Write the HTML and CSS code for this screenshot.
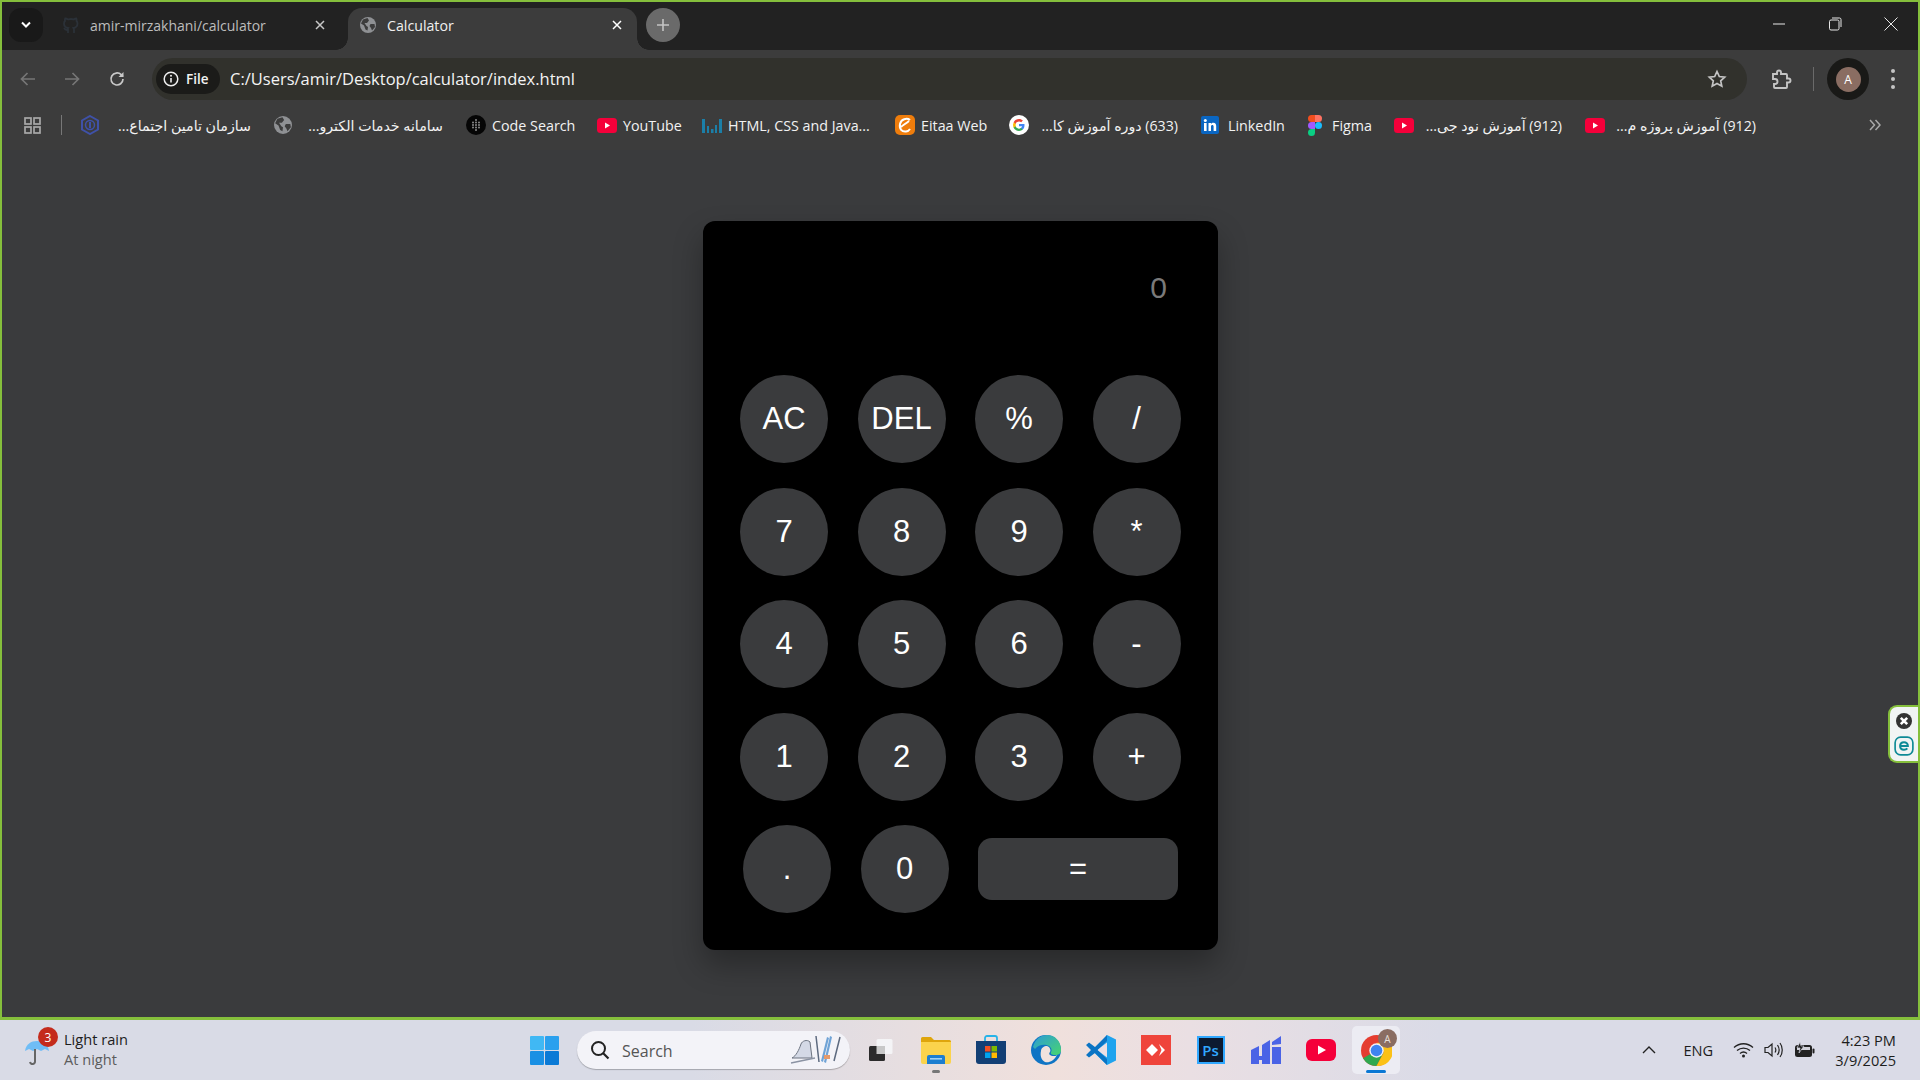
FILE: index.html
```html
<!DOCTYPE html>
<html lang="en">
<head>
<meta charset="utf-8">
<title>Calculator</title>
<link rel="stylesheet" href="styles.css">
</head>
<body>
<svg class="defs" width="0" height="0" aria-hidden="true">
  <symbol id="globe" viewBox="0 0 16 16"><circle cx="8" cy="8" r="8" fill="#8f9194"/><path d="M3 2.500 7.500 1 9 3.500 7 6 4.500 6 6.500 9 8 10 7.500 13.500 5.500 12.500 4 8.500 1 6.500ZM10.500 7h4l.5 3-3 3.500-1-2.500-1.500-2Z" fill="#3c3c3c"/></symbol>
  <symbol id="yt" viewBox="0 0 20 15"><rect width="20" height="15" rx="3.500" fill="#f5003a"/><path d="M8 4.500v6l5-3z" fill="#fff"/></symbol>
</svg>
<div class="window">
  <header class="tabstrip">
    <button class="tab-menu"><svg width="12" height="8" viewBox="0 0 12 8"><path d="M2 1.500 6 5.500 10 1.500" fill="none" stroke="#fff" stroke-width="2"/></svg></button>
    <div class="tab">
      <svg class="tab-icon" width="20" height="20" viewBox="0 0 20 20"><path d="M7 18v-3c-3 .5-3.500-1-4-2M13 18v-3c0-1 0-1.500-.5-2 2.500-.5 4-1.500 4-4.500 0-1-.4-2-1-2.500.2-.8.2-1.700-.2-2.500-1 0-2 .5-2.600 1a8 8 0 0 0-5.400 0C6.200 3.900 5.200 3.500 4.200 3.500c-.4.800-.4 1.700-.2 2.500-.6.500-1 1.500-1 2.500 0 3 1.500 4 4 4.500-.5.500-.5 1-.5 2" fill="none" stroke="#2b3138" stroke-width="1.800"/></svg>
      <span class="tab-title dim">amir-mirzakhani/calculator</span>
      <svg class="tab-close" width="10" height="10" viewBox="0 0 10 10"><path d="M1 1 9 9M9 1 1 9" stroke="#c8c8c8" stroke-width="1.500"/></svg>
    </div>
    <div class="tab active">
      <svg class="tab-icon" width="16" height="16"><use href="#globe"/></svg>
      <span class="tab-title">Calculator</span>
      <svg class="tab-close" width="10" height="10" viewBox="0 0 10 10"><path d="M1 1 9 9M9 1 1 9" stroke="#fff" stroke-width="1.500"/></svg>
    </div>
    <button class="new-tab"><svg width="14" height="14" viewBox="0 0 14 14"><path d="M7 1v12M1 7h12" stroke="#c4c4c4" stroke-width="1.600"/></svg></button>
    <div class="win-controls">
      <svg width="14" height="14" viewBox="0 0 14 14"><path d="M1 7h12" stroke="#e8e8e8" stroke-width="1"/></svg>
      <svg width="14" height="14" viewBox="0 0 14 14"><rect x="1.500" y="3" width="9.500" height="10" rx="1.500" fill="none" stroke="#e8e8e8"/><path d="M4 1h7.500A1.500 1.500 0 0 1 13 2.500V10" fill="none" stroke="#e8e8e8"/></svg>
      <svg width="14" height="14" viewBox="0 0 14 14"><path d="M.5.5l13 13M13.500.5l-13 13" stroke="#e8e8e8" stroke-width="1"/></svg>
    </div>
  </header>

  <div class="toolbar">
    <span class="nav"><svg width="18" height="16" viewBox="0 0 18 16"><path d="M16 8H3M8.500 2 2.500 8l6 6" fill="none" stroke="#767676" stroke-width="1.700"/></svg></span>
    <span class="nav"><svg width="18" height="16" viewBox="0 0 18 16"><path d="M2 8h13M9.500 2l6 6-6 6" fill="none" stroke="#767676" stroke-width="1.700"/></svg></span>
    <span class="nav reload"><svg width="18" height="18" viewBox="0 0 18 18"><path d="M15 9a6 6 0 1 1-1.800-4.300L15 6.500" fill="none" stroke="#c8c8c8" stroke-width="1.700"/><path d="M15.500 2v5h-5z" fill="#c8c8c8"/></svg></span>
    <div class="omnibox">
      <span class="chip"><svg width="16" height="16" viewBox="0 0 16 16"><circle cx="8" cy="8" r="6.800" fill="none" stroke="#eee" stroke-width="1.500"/><path d="M8 7v4.500" stroke="#eee" stroke-width="1.600"/><circle cx="8" cy="4.800" r="1" fill="#eee"/></svg>File</span>
      <span class="url">C:/Users/amir/Desktop/calculator/index.html</span>
      <svg class="star" width="20" height="20" viewBox="0 0 20 20"><path d="M10 2.500l2.300 5 5.400.6-4 3.700 1.100 5.400L10 14.500l-4.800 2.700 1.100-5.400-4-3.700 5.400-.6z" fill="none" stroke="#c4c4c4" stroke-width="1.700"/></svg>
    </div>
    <span class="ext"><svg width="22" height="22" viewBox="0 0 22 22"><path d="M3 6h4V4.500a2 2 0 0 1 4 0V6h5a1 1 0 0 1 1 1v3.500h1.500a2 2 0 0 1 0 4H17V19a1 1 0 0 1-1 1H5a1 1 0 0 1-1-1v-3h1a2.500 2.500 0 0 0 0-5H3z" fill="none" stroke="#c4c4c4" stroke-width="1.900"/></svg></span>
    <span class="tool-sep"></span>
    <span class="profile"><span class="avatar">A</span></span>
    <span class="dots"><i></i><i></i><i></i></span>
  </div>

  <nav class="bookmarks">
    <div class="apps">
      <svg width="17" height="17" viewBox="0 0 17 17"><g fill="none" stroke="#a8a8a8" stroke-width="1.700"><rect x="1" y="1" width="6" height="6"/><rect x="10" y="1" width="6" height="6"/><rect x="1" y="10" width="6" height="6"/><rect x="10" y="10" width="6" height="6"/></g></svg>
      <span class="bar-sep"></span>
    </div>
    <a class="bm"><svg width="18" height="20" viewBox="0 0 18 20"><path d="M9 1l8 4.500v9L9 19l-8-4.500v-9z" fill="none" stroke="#3f51a8" stroke-width="2"/><circle cx="9" cy="10" r="4.500" fill="none" stroke="#3f51a8" stroke-width="1.500"/><path d="M9 7v6" stroke="#3f51a8" stroke-width="2"/></svg><span class="bm-text" dir="rtl">سازمان تامین اجتماع...</span></a>
    <a class="bm"><svg width="18" height="18"><use href="#globe"/></svg><span class="bm-text" dir="rtl">سامانه خدمات الکترو...</span></a>
    <a class="bm"><svg width="20" height="20" viewBox="0 0 20 20"><circle cx="10" cy="10" r="10" fill="#050505"/><g fill="#8a8a8a"><circle cx="10" cy="5" r="1"/><circle cx="7" cy="7.500" r="1"/><circle cx="10" cy="7.500" r="1"/><circle cx="13" cy="7.500" r="1"/><circle cx="7" cy="10" r="1"/><circle cx="10" cy="10" r="1"/><circle cx="13" cy="10" r="1"/><circle cx="7" cy="12.500" r="1"/><circle cx="10" cy="12.500" r="1"/><circle cx="13" cy="12.500" r="1"/><circle cx="10" cy="15" r="1"/></g></svg><span class="bm-text">Code Search</span></a>
    <a class="bm"><svg width="20" height="15"><use href="#yt"/></svg><span class="bm-text">YouTube</span></a>
    <a class="bm"><svg width="20" height="16" viewBox="0 0 20 16"><g fill="#1b7fa8"><rect x="0" y="2" width="3" height="14"/><rect x="5" y="9" width="2" height="7"/><rect x="9" y="12" width="2.500" height="4"/><rect x="13" y="8" width="2" height="8"/><rect x="17" y="2" width="3" height="14"/></g></svg><span class="bm-text">HTML, CSS and Java...</span></a>
    <a class="bm"><svg width="20" height="20" viewBox="0 0 20 20"><rect width="20" height="20" rx="5" fill="#ef7d0c"/><path d="M6 12c1.500-1.500 5-3.500 8-6M15 5c-3-2.500-9-1-10 4s2 8 6 7.500c1.500-.2 3-1 4-2.500" fill="none" stroke="#fff" stroke-width="2"/></svg><span class="bm-text">Eitaa Web</span></a>
    <a class="bm"><svg width="20" height="20" viewBox="0 0 20 20"><circle cx="10" cy="10" r="10" fill="#fff"/><path d="M15.500 10.200c0-.5 0-.9-.1-1.300H10v2.400h3.100c-.2.800-.6 1.400-1.300 1.800v1.500h2c1.100-1.100 1.700-2.600 1.700-4.400z" fill="#4285f4"/><path d="M10 16c1.600 0 2.900-.5 3.800-1.400l-2-1.500c-.5.400-1.100.6-1.800.6-1.500 0-2.800-1-3.200-2.400H4.700v1.500C5.700 14.700 7.700 16 10 16z" fill="#34a853"/><path d="M6.800 11.300c-.3-.8-.3-1.800 0-2.600V7.200H4.700a6 6 0 0 0 0 5.600z" fill="#fbbc05"/><path d="M10 6.400c.9 0 1.600.3 2.200.9l1.700-1.700C12.900 4.600 11.600 4 10 4 7.700 4 5.700 5.300 4.700 7.200l2.100 1.500C7.200 7.400 8.500 6.400 10 6.400z" fill="#ea4335"/></svg><span class="bm-text" dir="rtl">(633) دوره آموزش کا...</span></a>
    <a class="bm li"><svg width="18" height="18" viewBox="0 0 18 18"><rect width="18" height="18" rx="2" fill="#0a66c2"/><rect x="3" y="7" width="2.600" height="8" fill="#fff"/><circle cx="4.300" cy="4.500" r="1.500" fill="#fff"/><path d="M7.500 7H10v1.100c.5-.8 1.300-1.300 2.400-1.300 2 0 2.800 1.300 2.800 3.300V15h-2.600v-4.400c0-1-.4-1.600-1.200-1.600-.9 0-1.400.7-1.400 1.600V15H7.500z" fill="#fff"/></svg><span class="bm-text">LinkedIn</span></a>
    <a class="bm fig"><svg width="14" height="21" viewBox="0 0 14 21"><path d="M7 0H3.500a3.500 3.500 0 0 0 0 7H7z" fill="#f24e1e"/><path d="M7 0h3.500a3.500 3.500 0 0 1 0 7H7z" fill="#ff7262"/><path d="M7 7H3.500a3.500 3.500 0 0 0 0 7H7z" fill="#a259ff"/><circle cx="10.500" cy="10.500" r="3.500" fill="#1abcfe"/><path d="M3.500 14H7v3.500A3.500 3.500 0 1 1 3.500 14z" fill="#0acf83"/></svg><span class="bm-text">Figma</span></a>
    <a class="bm"><svg width="20" height="15"><use href="#yt"/></svg><span class="bm-text" dir="rtl">(912) آموزش نود جی...</span></a>
    <a class="bm"><svg width="20" height="15"><use href="#yt"/></svg><span class="bm-text" dir="rtl">(912) آموزش پروژه م...</span></a>
    <svg class="more" width="12" height="12" viewBox="0 0 12 12"><path d="M1 1l4.500 5L1 11M6.500 1 11 6l-4.500 5" fill="none" stroke="#a8a8a8" stroke-width="1.500"/></svg>
  </nav>

  <main class="page">
    <section class="calc">
      <div class="display">0</div>
      <div class="keypad">
        <div class="key-row"><button class="key">AC</button><button class="key">DEL</button><button class="key">%</button><button class="key">/</button></div>
        <div class="key-row"><button class="key">7</button><button class="key">8</button><button class="key">9</button><button class="key">*</button></div>
        <div class="key-row"><button class="key">4</button><button class="key">5</button><button class="key">6</button><button class="key">-</button></div>
        <div class="key-row"><button class="key">1</button><button class="key">2</button><button class="key">3</button><button class="key">+</button></div>
        <div class="key-row last"><button class="key">.</button><button class="key">0</button><button class="key equals">=</button></div>
      </div>
    </section>
    <aside class="eset">
      <svg width="16" height="16" viewBox="0 0 16 16"><circle cx="8" cy="8" r="8" fill="#333"/><path d="M4.800 4.800l6.400 6.400M11.200 4.800l-6.400 6.400" stroke="#fff" stroke-width="2.600"/></svg>
      <svg width="20" height="20" viewBox="0 0 18 18"><rect x="1" y="1" width="16" height="16" rx="5" fill="none" stroke="#0e8a96" stroke-width="1.500"/><path d="M5.500 9h7c0-2-1.500-3.300-3.500-3.300S5.500 7 5.500 9s1.500 3.400 3.500 3.400c1.300 0 2.300-.4 3-1.200" fill="none" stroke="#0e8a96" stroke-width="1.800"/></svg>
    </aside>
  </main>
</div>

<footer class="taskbar">
  <div class="weather">
    <svg class="umbrella" width="26" height="28" viewBox="0 0 26 28"><path d="M1 12C2 5 7 2 13 2s11 3 12 10z" fill="#6fbdf6"/><path d="M1 12l4-2 4 2 4-2 4 2 4-2 4 2" fill="#d9dae6"/><path d="M11 10v12a2.500 2.500 0 0 1-5 1" fill="none" stroke="#666" stroke-width="2"/></svg>
    <span class="badge">3</span>
    <div class="weather-text"><span>Light rain</span><span class="muted">At night</span></div>
  </div>
  <svg class="start" width="29" height="29" viewBox="0 0 29 29"><rect width="14" height="14" rx="1" fill="#40b8f4"/><rect x="15" width="14" height="14" rx="1" fill="#2aa0ee"/><rect y="15" width="14" height="14" rx="1" fill="#1a90e4"/><rect x="15" y="15" width="14" height="14" rx="1" fill="#0b7ad6"/></svg>
  <div class="search">
    <svg width="20" height="20" viewBox="0 0 20 20"><circle cx="8.500" cy="8.500" r="6.500" fill="none" stroke="#222" stroke-width="2"/><path d="M13 13l5.500 5.500" stroke="#222" stroke-width="2.200"/></svg>
    <span class="search-text">Search</span>
    <svg class="ski" width="56" height="32" viewBox="0 0 56 32"><path d="M2 24c4-2 7-8 9-14 1-3 6-5 9-2l2 16z" fill="#d4d9e6" stroke="#6c7380"/><path d="M1 29l24-5" stroke="#8b93a3" stroke-width="1.500"/><path d="M26 2l3 26M50 3l-6 24" stroke="#5d6a7f" stroke-width="1.500"/><path d="M33 28 39 4l-2-1-6 24z M36 29 42 3l-2-1-6 26z" fill="#6fa3d6"/><path d="M34 21h6v4h-6z" fill="#e69a6a"/></svg>
  </div>
  <div class="apps-row">
    <span class="app"><svg width="24" height="22" viewBox="0 0 24 22"><rect x="7.500" y="0" width="16" height="15" rx="1.500" fill="#f4f4f6"/><rect x="0" y="7" width="16" height="15" rx="1.500" fill="#2b2b2b"/><rect x="7.500" y="7" width="8.500" height="8" fill="#c8c8c8"/></svg></span>
    <span class="app"><svg width="30" height="27" viewBox="0 0 30 27"><path d="M0 1.500A1.500 1.500 0 0 1 1.500 0H10l3 3h15.500A1.500 1.500 0 0 1 30 4.500V8H0z" fill="#dfa50c"/><path d="M0 5h30v20a2 2 0 0 1-2 2H2a2 2 0 0 1-2-2z" fill="#fbd34c"/><path d="M6 20a2 2 0 0 1 2-2h14a2 2 0 0 1 2 2v7H6z" fill="#1d7ed0"/><rect x="9" y="21" width="12" height="1.600" fill="#9ed0f5"/></svg><i class="pip"></i></span>
    <span class="app"><svg width="30" height="30" viewBox="0 0 30 30"><path d="M9 6V3a2 2 0 0 1 2-2h8a2 2 0 0 1 2 2v3" fill="none" stroke="#27b3e8" stroke-width="1.800"/><path d="M0 6h30v20a3 3 0 0 1-3 3H3a3 3 0 0 1-3-3z" fill="#123f75"/><rect x="9" y="11" width="5.500" height="5.500" fill="#f25022"/><rect x="15.500" y="11" width="5.500" height="5.500" fill="#7fba00"/><rect x="9" y="17.500" width="5.500" height="5.500" fill="#00a4ef"/><rect x="15.500" y="17.500" width="5.500" height="5.500" fill="#ffb900"/></svg></span>
    <span class="app"><svg width="30" height="30" viewBox="0 0 30 30"><defs><linearGradient id="edge" x1="0" y1="0" x2="1" y2="1"><stop offset="0" stop-color="#2d9ad8"/><stop offset="1" stop-color="#48d66e"/></linearGradient></defs><circle cx="15" cy="15" r="15" fill="#0f74c4"/><path d="M2 12C4 4 10 0 16 0c8 0 14 6 14 15 0 3-2 5-6 5-3 0-5-1-4-3 1-1 1-4-2-6-4-2-10-2-14 3z" fill="url(#edge)"/><path d="M10 16c0-3 3-5 6-5 3 1 4 4 3 6-2 2 0 4 4 4 1 0 2 0 3-1-3 6-8 8-12 7-4-2-5-7-4-11z" fill="#f0e2de"/></svg></span>
    <span class="app"><svg width="30" height="30" viewBox="0 0 30 30"><path d="M21 0 30 4.500v21L21 30 7 16.500 21 0z" fill="#1fa3ee"/><path d="M21 7.500 11 15l10 7.500z" fill="#ebdfe4"/><path d="M21 0 9 12 3 7.500 0 10l5 5-5 5 3 2.500 6-4.500L21 30v-6L11.500 15 21 6z" fill="#0b74c4"/></svg></span>
    <span class="app"><svg width="30" height="30" viewBox="0 0 30 30"><rect width="30" height="30" fill="#ef443b"/><path d="M11 9l6 6-6 6-6-6zM18 9l6 6-6 6 2.500-6z" fill="#fff"/></svg></span>
    <span class="app"><span class="ps">Ps</span></span>
    <span class="app"><svg width="30" height="28" viewBox="0 0 30 28"><path d="M0 14l8-4v18H0zM11 9l8-5v24h-8zM21 11h9v17h-9zM21 6l9-6v8l-9 1zM8 20h3v4H8z" fill="#4a63e6"/></svg></span>
    <span class="app"><svg width="30" height="22" viewBox="0 0 30 22"><rect width="30" height="22" rx="6" fill="#f5003a"/><path d="M12 6.500v9l8-4.500z" fill="#fff"/></svg></span>
    <span class="app current"><svg width="31" height="31" viewBox="0 0 30 30"><circle cx="15" cy="15" r="15" fill="#e53d30"/><path d="M15 15 2 22.500A15 15 0 0 0 15 30L22 17z" fill="#2fa84f"/><path d="M15 7.500h14A15 15 0 0 1 15 30L22 17z" fill="#fbc117"/><circle cx="15" cy="15" r="7" fill="#f0f0f5"/><circle cx="15" cy="15" r="5.600" fill="#3e84f0"/></svg><span class="app-avatar">A</span><i class="run-bar"></i></span>
  </div>
  <div class="tray">
    <svg width="14" height="8" viewBox="0 0 14 8"><path d="M1 7l6-6 6 6" fill="none" stroke="#222" stroke-width="1.400"/></svg>
    <span class="lang">ENG</span>
    <svg class="tray-wifi" width="21" height="16" viewBox="0 0 21 16"><g fill="none" stroke="#222" stroke-width="1.300"><path d="M1 5.500c5.500-5 13.500-5 19 0M4 8.500c3.800-3.300 9.200-3.300 13 0M7 11.500c2-1.700 5-1.700 7 0"/></g><circle cx="10.500" cy="14" r="1.500" fill="#222"/></svg>
    <svg class="tray-vol" width="20" height="18" viewBox="0 0 20 18"><g fill="none" stroke="#222" stroke-width="1.200"><path d="M1 6.500h3l4-3.500v12l-4-3.500H1z"/><path d="M11 6.500c1 1.500 1 3.500 0 5M13.500 4c2 3 2 7 0 10M16 2c3 4 3 10 0 14"/></g></svg>
    <svg class="tray-bat" width="21" height="16" viewBox="0 0 21 16"><rect x="1" y="3" width="17" height="12" rx="2.500" fill="#222"/><rect x="3" y="5" width="13" height="3" fill="#d0d0d8"/><rect x="18.500" y="6.500" width="2" height="5" rx="1" fill="#222"/><path d="M6 0 3 6h3L5 11l5-7H7z" fill="#222" stroke="#dadbe6" stroke-width=".7"/></svg>
    <div class="clock"><span>4:23 PM</span><span>3/9/2025</span></div>
  </div>
</footer>
</body>
</html>
```
FILE: styles.css
```css
* { box-sizing: border-box; }
html, body { margin: 0; height: 100%; }
body {
  width: 1920px;
  height: 1080px;
  overflow: hidden;
  display: flex;
  flex-direction: column;
  font-family: "Open Sans", "DejaVu Sans", sans-serif;
  position: relative;
}
button { font: inherit; border: 0; padding: 0; }
.defs { position: absolute; }

.window {
  height: 1020px;
  border: 2px solid #85bf3c;
  border-bottom-width: 3px;
  display: flex;
  flex-direction: column;
  background: #3a3b3d;
  flex: none;
}

/* tabs */
.tabstrip {
  height: 48px;
  flex: none;
  background: #222222;
  display: flex;
  align-items: flex-end;
  padding-left: 7px;
  color: #fff;
}
.tab-menu {
  width: 34px;
  height: 34px;
  margin-bottom: 8px;
  background: #191919;
  border-radius: 12px;
  display: flex;
  align-items: center;
  justify-content: center;
}
.tab {
  width: 305px;
  height: 42px;
  display: flex;
  align-items: center;
  padding: 0 23px 8px 18px;
  position: relative;
}
.tab.active {
  width: 289px;
  background: #3c3c3c;
  border-radius: 14px 14px 0 0;
  padding: 0 15px 8px 12px;
}
.tab.active::before, .tab.active::after {
  content: "";
  position: absolute;
  bottom: 0;
  width: 12px;
  height: 12px;
  background: #222;
}
.tab.active::before { left: -12px; background: radial-gradient(circle at 0 0, #222 11.500px, #3c3c3c 12px); }
.tab.active::after { right: -12px; background: radial-gradient(circle at 100% 0, #222 11.500px, #3c3c3c 12px); }
.tab-icon { flex: none; }
.tab-title { flex: 1; margin-left: 9px; font-size: 14px; white-space: nowrap; color: #f0f0f0; }
.tab .tab-title.dim { color: #bdbdbd; }
.tab.active .tab-title { margin-left: 11px; font-size: 14.200px; }
.new-tab {
  width: 34px;
  height: 34px;
  margin: 0 0 8px 9px;
  border-radius: 50%;
  background: #6a6a6a;
  display: flex;
  align-items: center;
  justify-content: center;
}
.win-controls {
  margin-left: auto;
  height: 100%;
  display: flex;
  align-items: center;
  gap: 42px;
  padding: 0 20px 4px 0;
}

/* toolbar */
.toolbar {
  height: 50px;
  flex: none;
  background: #3c3c3c;
  display: flex;
  align-items: flex-end;
  padding-left: 4px;
}
.nav {
  width: 44px;
  height: 42px;
  display: flex;
  align-items: center;
  justify-content: center;
}
.nav.reload { padding-left: 2px; }
.omnibox {
  margin-left: 14px;
  width: 1595px;
  height: 42px;
  border-radius: 21px;
  background: #31312c;
  display: flex;
  align-items: center;
  padding: 0 20px 1px 4px;
}
.chip {
  width: 64px;
  height: 30px;
  border-radius: 15px;
  background: #1b1b19;
  display: flex;
  align-items: center;
  gap: 7px;
  padding-left: 7px;
  font-size: 13.500px;
  font-weight: 600;
  color: #f2f2f2;
}
.url { flex: 1; margin-left: 10px; font-size: 16.500px; color: #f4f4f4; white-space: nowrap; }
.star { flex: none; }
.ext { margin-left: 23px; width: 22px; height: 42px; display: flex; align-items: center; }
.tool-sep { width: 1px; height: 24px; background: #6a6a6a; margin: 0 0 9px 21px; }
.profile {
  width: 42px;
  height: 42px;
  margin: 0 0 0 13px;
  border-radius: 50%;
  background: #191917;
  display: flex;
  align-items: center;
  justify-content: center;
}
.avatar {
  width: 25px;
  height: 25px;
  border-radius: 50%;
  background: #8a6d62;
  color: #fff;
  font-size: 12px;
  display: flex;
  align-items: center;
  justify-content: center;
}
.dots { margin-left: 22px; height: 42px; display: flex; flex-direction: column; justify-content: center; gap: 4px; }
.dots i { width: 4px; height: 4px; border-radius: 50%; background: #c4c4c4; }

/* bookmarks */
.bookmarks {
  height: 50px;
  flex: none;
  background: #3c3c3c;
  display: grid;
  grid-template-columns: 79px 193px 192px 131px 105px 193px 114px 192px 104px 89px 191px 194px 1fr;
  align-items: center;
}
.apps { display: flex; align-items: center; padding-left: 22px; gap: 20px; }
.bar-sep { width: 1px; height: 20px; background: #777; }
.bm { display: flex; align-items: center; gap: 6px; padding-right: 23px; min-width: 0; }
.bm.li { gap: 9px; }
.bm.fig { gap: 10px; }
.bm.fig svg { margin-left: 3px; }
.bm svg { flex: none; }
.bm-text { flex: 1; font-size: 14.300px; color: #f2f2f2; white-space: nowrap; }
.bm-text[dir="rtl"] { font-size: 14.200px; }
.more { justify-self: end; margin-right: 37px; }

/* page */
.page {
  flex: 1;
  position: relative;
  display: flex;
  justify-content: center;
  align-items: flex-start;
  background: #3a3b3d;
  padding-top: 71px;
  padding-left: 1px;
}
.calc {
  width: 515px;
  height: 729px;
  background: #000;
  border-radius: 12px;
  box-shadow: 0 15px 30px rgba(0, 0, 0, .3);
  font-family: "Liberation Sans", Arial, sans-serif;
}
.display {
  height: 154px;
  display: flex;
  justify-content: flex-end;
  align-items: center;
  padding: 0 51px 20px 0;
  font-size: 30px;
  color: #7a7a7a;
}
.keypad { display: flex; flex-direction: column; gap: 24.500px; padding-left: 37px; }
.key-row { display: flex; align-items: center; gap: 29.500px; }
.key-row.last { margin-left: 3px; gap: 29.500px; }
.key {
  width: 88px;
  height: 88px;
  border-radius: 50%;
  background: #3a3b3d;
  color: #fff;
  font-family: "Liberation Sans", Arial, sans-serif;
  font-size: 31px;
}
.key.equals { width: 200px; height: 62px; border-radius: 14px; }
.eset {
  position: absolute;
  right: 0;
  top: 555px;
  width: 30px;
  height: 58px;
  background: #f1f4f4;
  border: 2px solid #85bf3c;
  border-right: 0;
  border-radius: 9px 0 0 9px;
  display: flex;
  flex-direction: column;
  align-items: center;
  justify-content: center;
  gap: 7px;
}

/* taskbar */
.taskbar {
  flex: 1;
  background: linear-gradient(90deg, #d9dbe6 0, #d9dbe6 36%, #f0e0dc 55%, #eadfe3 62%, #dadbe7 75%, #dadbe7 100%);
  display: flex;
  align-items: center;
  color: #1d1d1d;
  font-size: 14.600px;
  position: relative;
}
.weather { width: 530px; flex: none; display: flex; align-items: center; position: relative; padding-left: 24px; }
.umbrella { margin-top: 6px; flex: none; }
.badge {
  position: absolute;
  left: 38px;
  top: -2px;
  width: 20px;
  height: 20px;
  border-radius: 50%;
  background: #c42b1c;
  color: #fff;
  font-size: 12px;
  display: flex;
  align-items: center;
  justify-content: center;
}
.weather-text { display: flex; flex-direction: column; margin: 0 0 2px 14px; line-height: 20px; }
.muted { color: #5c5c5c; }
.start { flex: none; }
.search {
  margin-left: 18px;
  width: 273px;
  height: 38px;
  border-radius: 19px;
  background: #f3f3f8;
  box-shadow: 0 1px 1px rgba(0, 0, 0, .25);
  display: flex;
  align-items: center;
  padding: 0 4px 0 13px;
  flex: none;
}
.search-text { flex: 1; margin: 2px 0 0 12px; font-size: 16px; color: #555; }
.apps-row { display: flex; align-items: center; margin-left: 3px; }
.app { width: 55px; height: 48px; display: flex; align-items: center; justify-content: center; position: relative; }
.app.current { width: 48px; margin-left: 4px; background: #ececf3; border-radius: 5px; }
.pip { position: absolute; left: 24px; bottom: 1px; width: 8px; height: 3px; border-radius: 2px; background: #777; }
.run-bar { position: absolute; left: 14px; bottom: 1px; width: 20px; height: 3px; border-radius: 2px; background: #0a78d4; }
.app-avatar {
  position: absolute;
  right: 3px;
  top: 3px;
  width: 19px;
  height: 19px;
  border-radius: 50%;
  background: #8a6d62;
  color: #e8e0dc;
  font-size: 10px;
  display: flex;
  align-items: center;
  justify-content: center;
}
.ps {
  width: 28px;
  height: 28px;
  background: #0c1a30;
  border: 2px solid #31a8ff;
  color: #31a8ff;
  font-size: 15px;
  font-weight: 600;
  display: flex;
  align-items: center;
  justify-content: center;
}
.tray { margin-left: auto; display: flex; align-items: center; padding-right: 24px; }
.lang { margin-left: 28px; }
.tray-wifi { margin-left: 20px; }
.tray-vol { margin-left: 10px; }
.tray-bat { margin-left: 10px; }
.clock { display: flex; flex-direction: column; align-items: flex-end; margin-left: 20px; line-height: 20px; }
```
